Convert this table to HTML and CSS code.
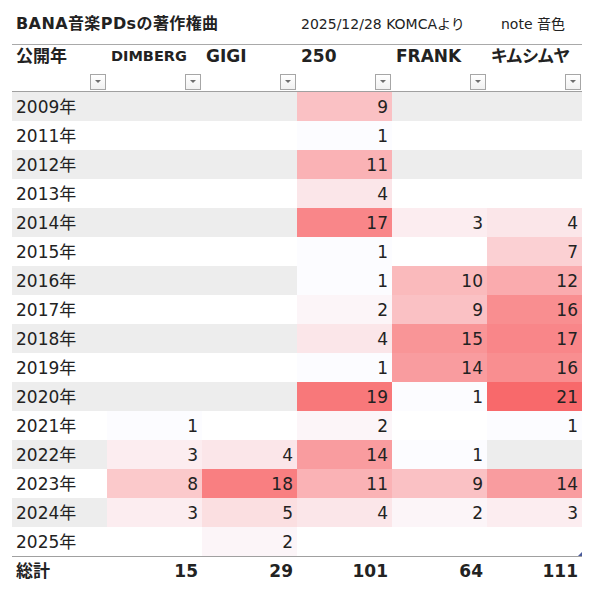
FILE: index.html
```html
<!DOCTYPE html>
<html lang="ja">
<head>
<meta charset="utf-8">
<title>BANA音楽PDsの著作権曲</title>
<link rel="stylesheet" href="styles.css">
</head>
<body>
<div class="sheet">
  <div class="title-row">
    <div class="title">BANA音楽PDsの著作権曲</div>
    <div class="date">2025/12/28 KOMCAより</div>
    <div class="note">note 音色</div>
  </div>
  <table class="pivot">
    <colgroup><col><col><col><col><col><col class="last"></colgroup>
    <thead>
      <tr>
        <th><div class="hd"><span class="name">公開年</span><span class="btn"></span></div></th>
        <th><div class="hd"><span class="name small">DIMBERG</span><span class="btn"></span></div></th>
        <th><div class="hd"><span class="name">GIGI</span><span class="btn"></span></div></th>
        <th><div class="hd"><span class="name">250</span><span class="btn"></span></div></th>
        <th><div class="hd"><span class="name">FRANK</span><span class="btn"></span></div></th>
        <th><div class="hd"><span class="name kana">キムシムヤ</span><span class="btn"></span></div></th>
      </tr>
    </thead>
    <tbody>
      <tr class="alt"><td class="y">2009年</td><td></td><td></td><td class="n" style="background:#fac1c4">9</td><td></td><td></td></tr>
      <tr><td class="y">2011年</td><td></td><td></td><td class="n" style="background:#fcfcff">1</td><td></td><td></td></tr>
      <tr class="alt"><td class="y">2012年</td><td></td><td></td><td class="n" style="background:#fab2b5">11</td><td></td><td></td></tr>
      <tr><td class="y">2013年</td><td></td><td></td><td class="n" style="background:#fbe6e9">4</td><td></td><td></td></tr>
      <tr class="alt"><td class="y">2014年</td><td></td><td></td><td class="n" style="background:#f98689">17</td><td class="n" style="background:#fcedf0">3</td><td class="n" style="background:#fbe6e9">4</td></tr>
      <tr><td class="y">2015年</td><td></td><td></td><td class="n" style="background:#fcfcff">1</td><td></td><td class="n" style="background:#fbd0d3">7</td></tr>
      <tr class="alt"><td class="y">2016年</td><td></td><td></td><td class="n" style="background:#fcfcff">1</td><td class="n" style="background:#fababc">10</td><td class="n" style="background:#faabae">12</td></tr>
      <tr><td class="y">2017年</td><td></td><td></td><td class="n" style="background:#fcf5f8">2</td><td class="n" style="background:#fac1c4">9</td><td class="n" style="background:#f98e90">16</td></tr>
      <tr class="alt"><td class="y">2018年</td><td></td><td></td><td class="n" style="background:#fbe6e9">4</td><td class="n" style="background:#f99597">15</td><td class="n" style="background:#f98689">17</td></tr>
      <tr><td class="y">2019年</td><td></td><td></td><td class="n" style="background:#fcfcff">1</td><td class="n" style="background:#f99c9f">14</td><td class="n" style="background:#f98e90">16</td></tr>
      <tr class="alt"><td class="y">2020年</td><td></td><td></td><td class="n" style="background:#f8787a">19</td><td class="n" style="background:#fcfcff">1</td><td class="n" style="background:#f8696b">21</td></tr>
      <tr><td class="y">2021年</td><td class="n" style="background:#fcfcff">1</td><td></td><td class="n" style="background:#fcf5f8">2</td><td></td><td class="n" style="background:#fcfcff">1</td></tr>
      <tr class="alt"><td class="y">2022年</td><td class="n" style="background:#fcedf0">3</td><td class="n" style="background:#fbe6e9">4</td><td class="n" style="background:#f99c9f">14</td><td class="n" style="background:#fcfcff">1</td><td></td></tr>
      <tr><td class="y">2023年</td><td class="n" style="background:#fbc9cb">8</td><td class="n" style="background:#f97f81">18</td><td class="n" style="background:#fab2b5">11</td><td class="n" style="background:#fac1c4">9</td><td class="n" style="background:#f99c9f">14</td></tr>
      <tr class="alt"><td class="y">2024年</td><td class="n" style="background:#fcedf0">3</td><td class="n" style="background:#fbdfe1">5</td><td class="n" style="background:#fbe6e9">4</td><td class="n" style="background:#fcf5f8">2</td><td class="n" style="background:#fcedf0">3</td></tr>
      <tr class="lastrow"><td class="y">2025年</td><td></td><td class="n" style="background:#fcf5f8">2</td><td></td><td></td><td class="corner"></td></tr>
    </tbody>
    <tfoot>
      <tr><td class="y">総計</td><td class="n">15</td><td class="n">29</td><td class="n">101</td><td class="n">64</td><td class="n">111</td></tr>
    </tfoot>
  </table>
</div>
</body>
</html>
```

FILE: styles.css
```css
html, body {
  margin: 0;
  padding: 0;
  background: #ffffff;
}

body {
  font-family: "DejaVu Sans", "Noto Sans CJK JP", sans-serif;
  color: #222222;
}

.sheet {
  width: 570px;
  margin-left: 12px;
}

.title-row {
  display: grid;
  grid-template-columns: repeat(6, 95px);
  height: 44px;
  align-items: center;
}

.title {
  grid-column: 1 / 4;
  padding-left: 4px;
  font-size: 16px;
  letter-spacing: 0.4px;
  font-weight: bold;
  white-space: nowrap;
}

.date {
  grid-column: 4 / 6;
  padding-left: 4px;
  font-size: 14px;
  white-space: nowrap;
  padding-top: 2px;
}

.note {
  grid-column: 6 / 7;
  padding-left: 14px;
  font-size: 14px;
  white-space: nowrap;
  padding-top: 2px;
}

.pivot {
  width: 570px;
  table-layout: fixed;
  border-collapse: separate;
  border-spacing: 0;
}

.pivot col {
  width: 95px;
}

.pivot th {
  padding: 0;
  border-top: 1px solid #a9a9a9;
  border-bottom: 1px solid #a0a0a0;
  text-align: left;
  vertical-align: top;
  font-weight: bold;
}

.hd {
  display: flex;
  flex-direction: column;
  height: 46px;
}

.name {
  display: block;
  padding-left: 4px;
  padding-top: 1px;
  font-size: 17px;
  line-height: 20px;
  white-space: nowrap;
}

.name.small {
  font-size: 14.5px;
}

.name.kana {
  font-feature-settings: "palt";
}

.btn {
  position: relative;
  display: block;
  box-sizing: border-box;
  width: 16px;
  height: 16px;
  margin-top: auto;
  margin-right: 1px;
  margin-bottom: 1px;
  align-self: flex-end;
  border: 1px solid #a6a6a6;
  background: linear-gradient(#ffffff, #f1f1f1);
}

.btn::after {
  content: "";
  position: absolute;
  left: 4px;
  top: 5px;
  border-left: 3px solid transparent;
  border-right: 3px solid transparent;
  border-top: 3px solid #6e6e6e;
}

.pivot td {
  height: 29px;
  padding: 0 4px;
  font-size: 17px;
  line-height: 20px;
  white-space: nowrap;
}

.pivot tbody tr.alt td {
  background: #ededed;
}

.pivot td.y {
  text-align: left;
  padding-left: 4px;
}

.pivot td.n {
  text-align: right;
  padding-right: 4px;
}

.pivot tbody tr.lastrow td {
  border-bottom: 1px solid #a0a0a0;
}

.pivot td.corner {
  position: relative;
}

.pivot td.corner::after {
  content: "";
  position: absolute;
  right: 0;
  bottom: 0;
  border-left: 4px solid transparent;
  border-bottom: 4px solid #4a5a9c;
}

.pivot tfoot td {
  height: 28px;
  font-weight: bold;
}
```
